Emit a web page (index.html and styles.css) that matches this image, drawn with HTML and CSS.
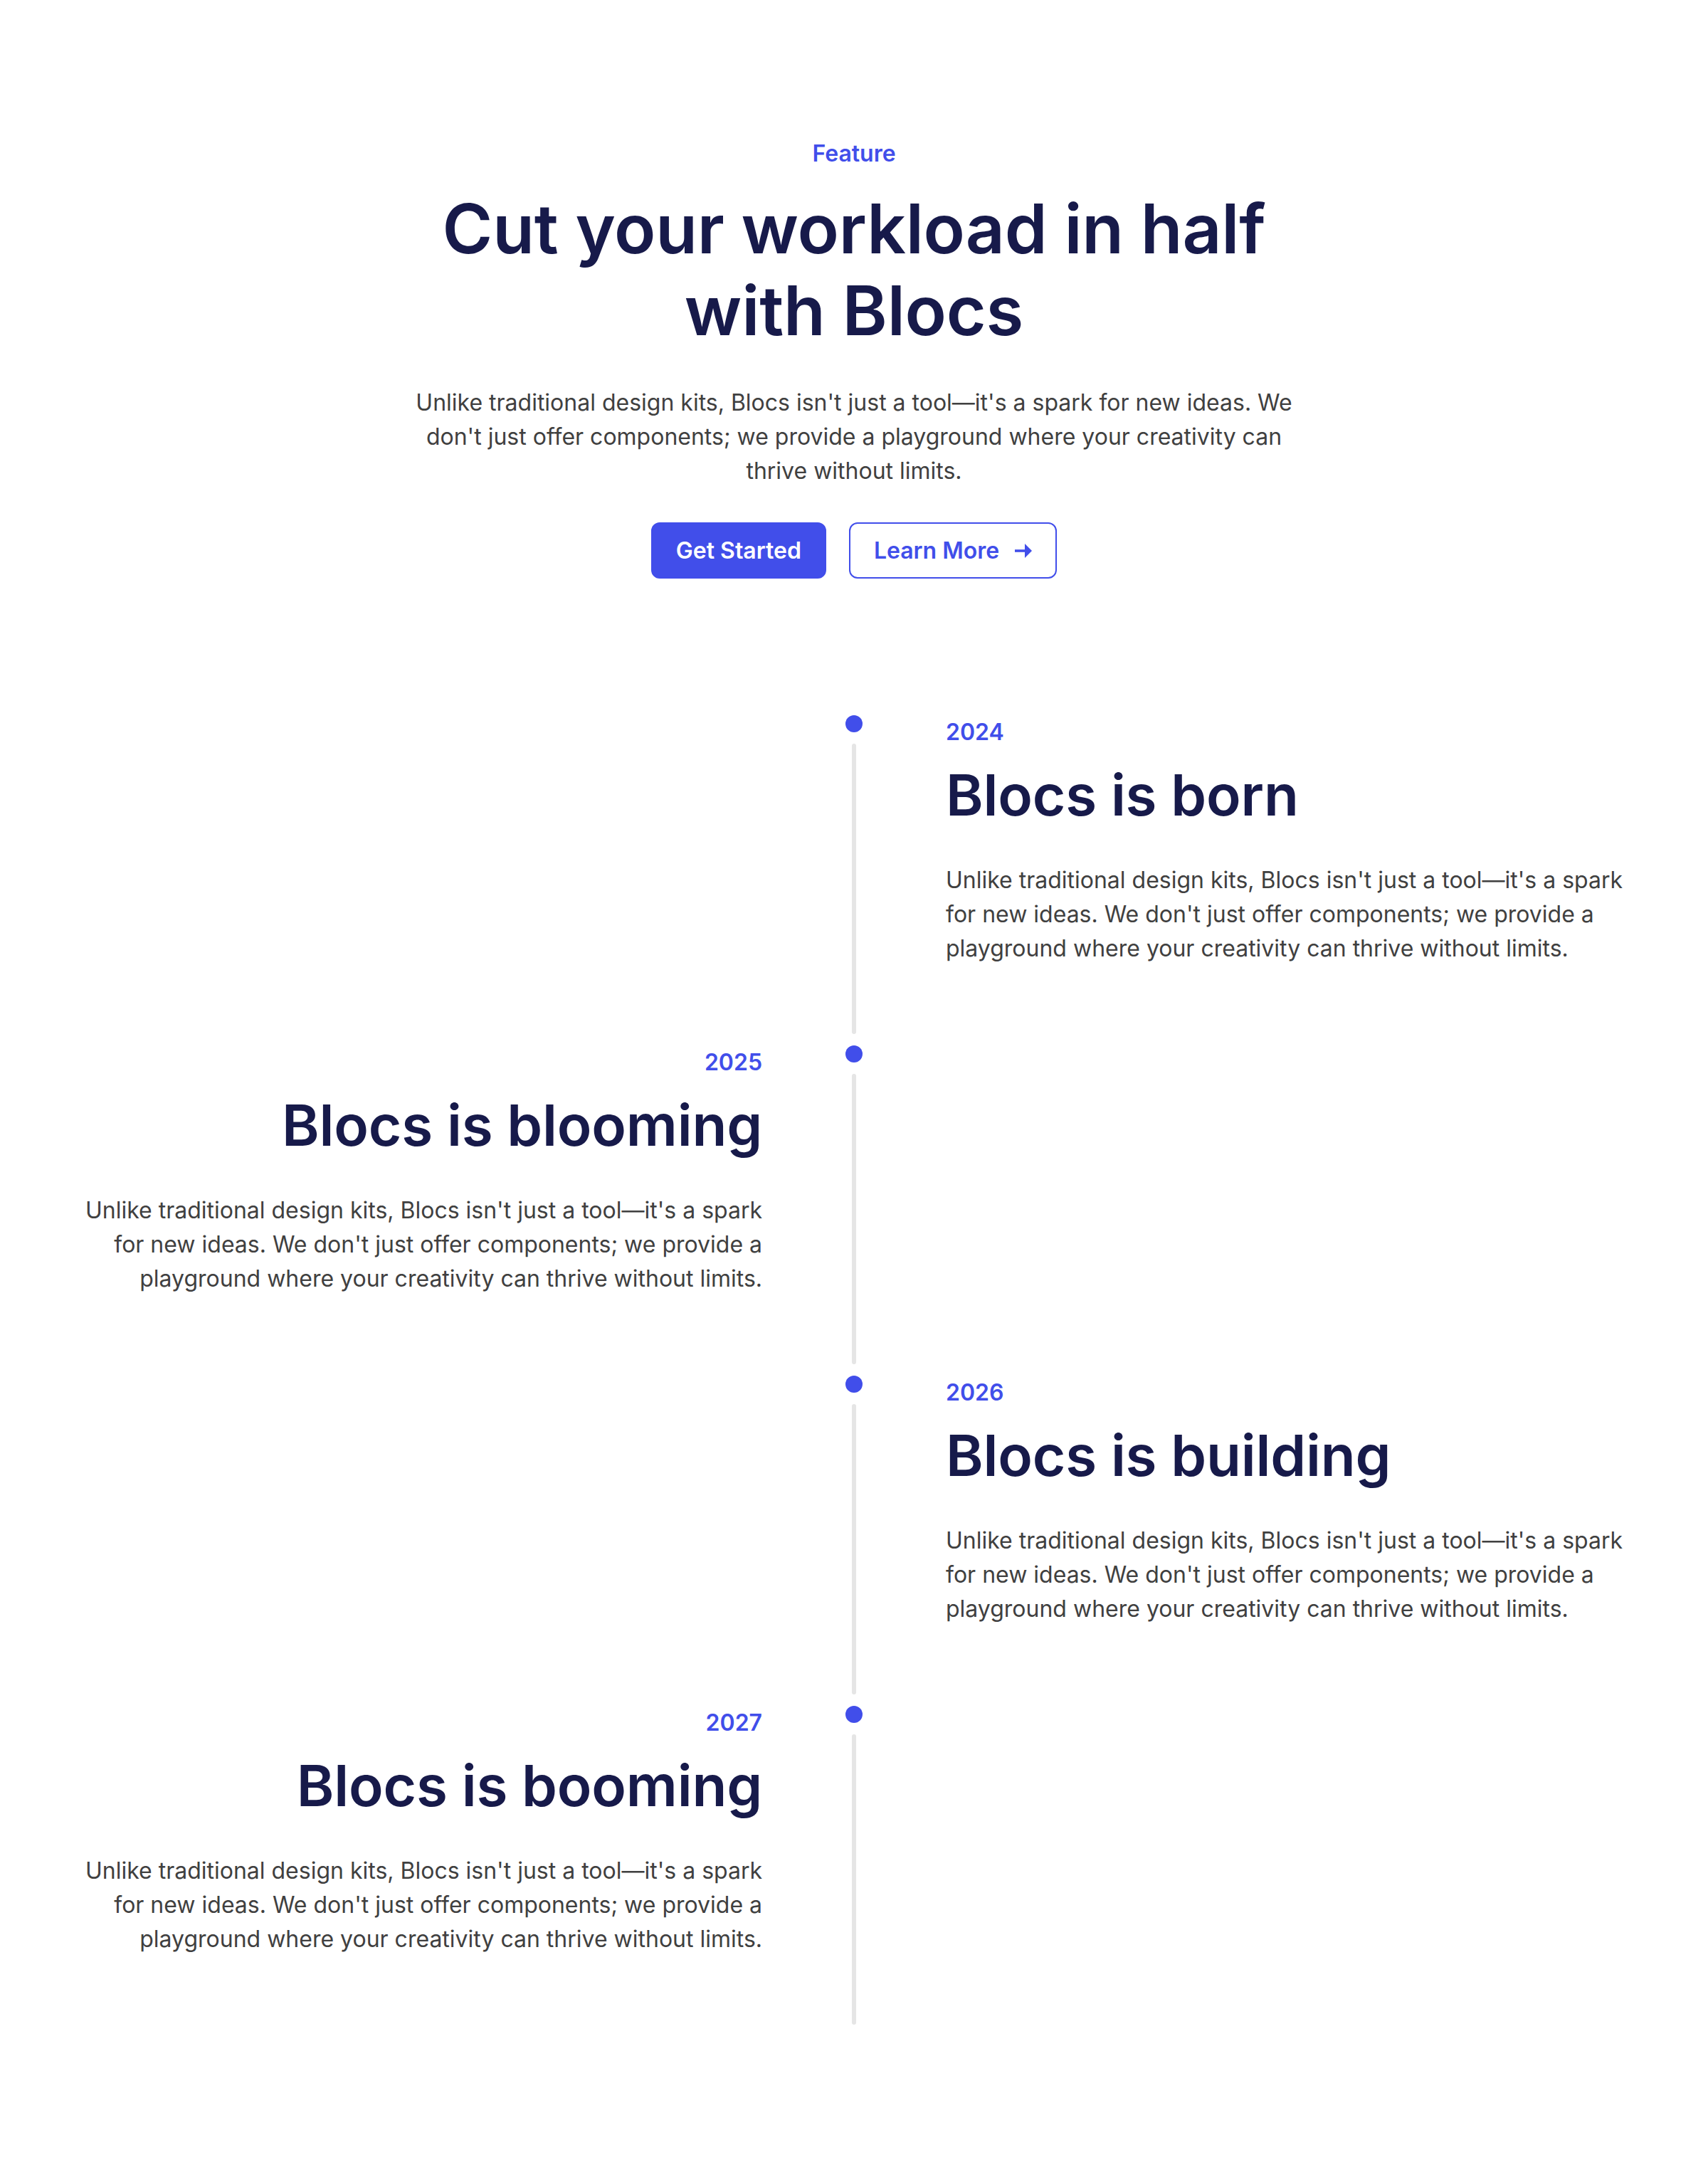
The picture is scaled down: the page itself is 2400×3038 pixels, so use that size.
FILE: index.html
```html
<!DOCTYPE html>
<html lang="en">
<head>
<meta charset="utf-8">
<title>Blocs Timeline</title>
<link rel="stylesheet" href="styles.css">
</head>
<body>
<main class="page">
  <header class="hero">
    <p class="eyebrow">Feature</p>
    <h1 class="hero-title">Cut your workload in half with Blocs</h1>
    <p class="hero-text">Unlike traditional design kits, Blocs isn't just a tool—it's a spark for new ideas. We don't just offer components; we provide a playground where your creativity can thrive without limits.</p>
    <div class="actions">
      <a class="btn btn-primary" href="#">Get Started</a>
      <a class="btn btn-outline" href="#">Learn More
        <svg class="arrow" width="24" height="20" viewBox="0 0 24 20" aria-hidden="true"><rect x="0" y="8.2" width="15" height="3.6" fill="currentColor"/><polygon points="14,0 24,10 14,20" fill="currentColor"/></svg>
      </a>
    </div>
  </header>

  <section class="timeline">
    <div class="tl-row">
      <div class="tl-side"></div>
      <div class="tl-axis"><span class="tl-dot"></span><span class="tl-line"></span></div>
      <div class="tl-side tl-right">
        <p class="tl-year">2024</p>
        <h2 class="tl-title">Blocs is born</h2>
        <p class="tl-text">Unlike traditional design kits, Blocs isn't just a tool—it's a spark for new ideas. We don't just offer components; we provide a playground where your creativity can thrive without limits.</p>
      </div>
    </div>
    <div class="tl-row">
      <div class="tl-side tl-left">
        <p class="tl-year">2025</p>
        <h2 class="tl-title">Blocs is blooming</h2>
        <p class="tl-text">Unlike traditional design kits, Blocs isn't just a tool—it's a spark for new ideas. We don't just offer components; we provide a playground where your creativity can thrive without limits.</p>
      </div>
      <div class="tl-axis"><span class="tl-dot"></span><span class="tl-line"></span></div>
      <div class="tl-side"></div>
    </div>
    <div class="tl-row">
      <div class="tl-side"></div>
      <div class="tl-axis"><span class="tl-dot"></span><span class="tl-line"></span></div>
      <div class="tl-side tl-right">
        <p class="tl-year">2026</p>
        <h2 class="tl-title">Blocs is building</h2>
        <p class="tl-text">Unlike traditional design kits, Blocs isn't just a tool—it's a spark for new ideas. We don't just offer components; we provide a playground where your creativity can thrive without limits.</p>
      </div>
    </div>
    <div class="tl-row">
      <div class="tl-side tl-left">
        <p class="tl-year">2027</p>
        <h2 class="tl-title">Blocs is booming</h2>
        <p class="tl-text">Unlike traditional design kits, Blocs isn't just a tool—it's a spark for new ideas. We don't just offer components; we provide a playground where your creativity can thrive without limits.</p>
      </div>
      <div class="tl-axis"><span class="tl-dot"></span><span class="tl-line"></span></div>
      <div class="tl-side"></div>
    </div>
  </section>
</main>
</body>
</html>
```

FILE: styles.css
```css
* { box-sizing: border-box; }

html, body {
  margin: 0;
  padding: 0;
  background: #ffffff;
}

body {
  font-family: Inter, "Noto Sans", "Liberation Sans", sans-serif;
  color: #404040;
}

.page {
  padding: 192px 110px 192px;
}

.hero {
  display: flex;
  flex-direction: column;
  align-items: center;
  text-align: center;
}

.eyebrow {
  margin: 0;
  font-size: 32px;
  line-height: 48px;
  font-weight: 600;
  color: #414eea;
}

.hero-title {
  margin: 24px 0 0;
  max-width: 1220px;
  font-size: 96px;
  line-height: 1.2;
  font-weight: 600;
  letter-spacing: -0.2px;
  color: #171a4a;
}

.hero-text {
  margin: 48px 0 0;
  max-width: 1250px;
  font-size: 32px;
  line-height: 48px;
  color: #404040;
}

.actions {
  display: flex;
  gap: 32px;
  margin-top: 48px;
}

.btn {
  display: inline-flex;
  align-items: center;
  gap: 22px;
  height: 79px;
  padding: 0 33px;
  border: 2px solid #414eea;
  border-radius: 12px;
  font-size: 32px;
  font-weight: 600;
  text-decoration: none;
}

.btn-primary {
  background: #414eea;
  color: #ffffff;
}

.btn-outline {
  background: #ffffff;
  color: #414eea;
}

.arrow { display: block; }

.timeline {
  margin-top: 192px;
  display: flex;
  flex-direction: column;
  gap: 16px;
}

.tl-row {
  display: grid;
  grid-template-columns: 1fr 24px 1fr;
  column-gap: 117px;
}

.tl-axis {
  display: flex;
  flex-direction: column;
  align-items: center;
  gap: 16px;
}

.tl-dot {
  width: 24px;
  height: 24px;
  border-radius: 50%;
  background: #414eea;
  flex: none;
}

.tl-line {
  flex: 1;
  width: 6px;
  border-radius: 3px;
  background: #e5e5e5;
}

.tl-side {
  padding-bottom: 96px;
}

.tl-left { text-align: right; }
.tl-right { text-align: left; }

.tl-year {
  margin: 0;
  font-size: 32px;
  line-height: 48px;
  font-weight: 600;
  color: #414eea;
}

.tl-title {
  margin: 16px 0 0;
  font-size: 80px;
  line-height: 96px;
  font-weight: 600;
  letter-spacing: -0.2px;
  color: #171a4a;
}

.tl-text {
  margin: 48px 0 0;
  font-size: 32px;
  line-height: 48px;
  color: #404040;
}
```
